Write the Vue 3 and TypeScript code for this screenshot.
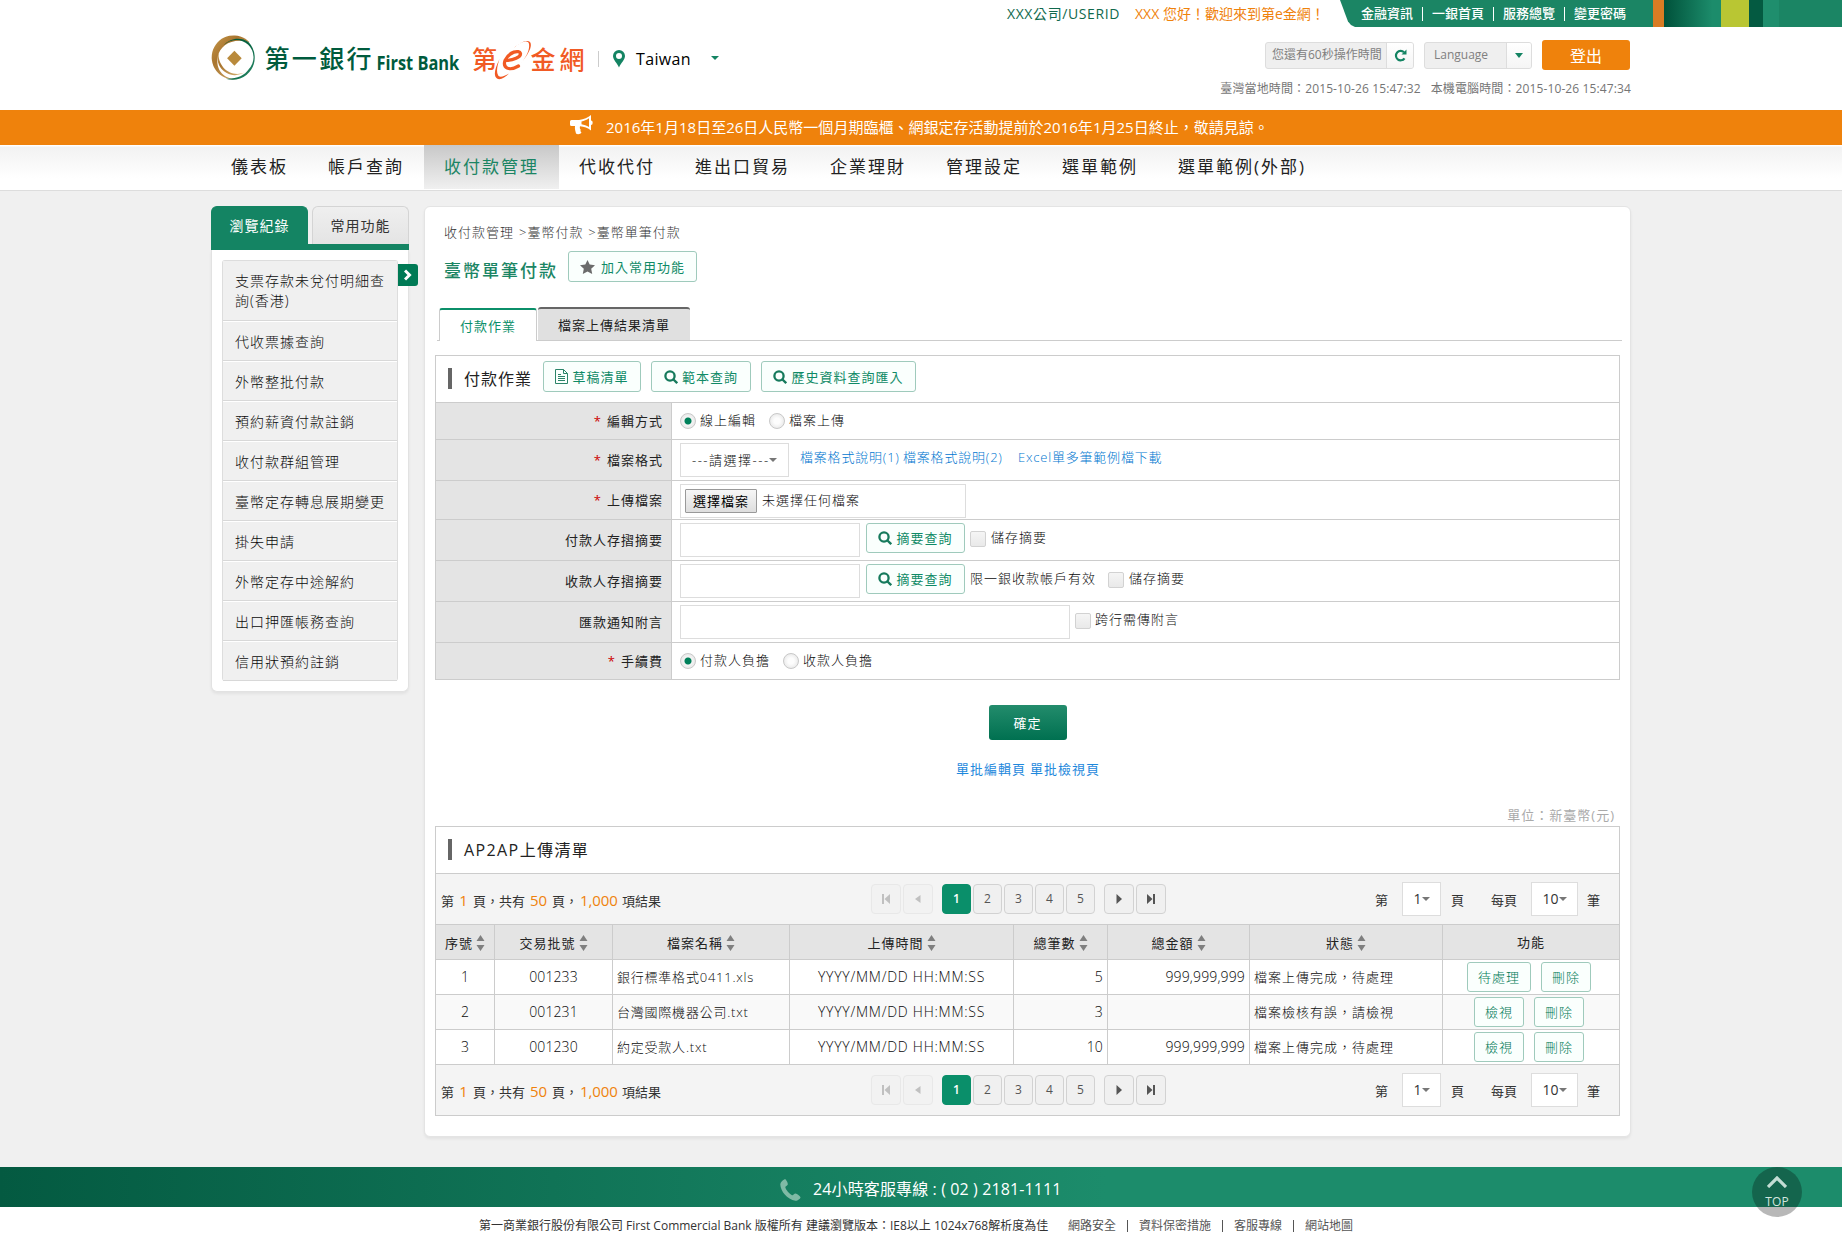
<script setup lang="ts">
interface Row {
  no: number
  batch: string
  file: string
  count: string
  amount: string
  status: string
  actions: string[]
}

const topLinks: string[] = ['金融資訊', '一銀首頁', '服務總覽', '變更密碼']
const navItems: string[] = ['儀表板', '帳戶查詢', '收付款管理', '代收代付', '進出口貿易', '企業理財', '管理設定', '選單範例', '選單範例(外部)']
const history: string[] = [
  '支票存款未兌付明細查詢(香港)',
  '代收票據查詢',
  '外幣整批付款',
  '預約薪資付款註銷',
  '收付款群組管理',
  '臺幣定存轉息展期變更',
  '掛失申請',
  '外幣定存中途解約',
  '出口押匯帳務查詢',
  '信用狀預約註銷',
]
const columns: string[] = ['序號', '交易批號', '檔案名稱', '上傳時間', '總筆數', '總金額', '狀態']
const rows: Row[] = [
  { no: 1, batch: '001233', file: '銀行標準格式0411.xls', count: '5', amount: '999,999,999', status: '檔案上傳完成，待處理', actions: ['待處理', '刪除'] },
  { no: 2, batch: '001231', file: '台灣國際機器公司.txt', count: '3', amount: '', status: '檔案檢核有誤，請檢視', actions: ['檢視', '刪除'] },
  { no: 3, batch: '001230', file: '約定受款人.txt', count: '10', amount: '999,999,999', status: '檔案上傳完成，待處理', actions: ['檢視', '刪除'] },
]
const footLinks: string[] = ['網路安全', '資料保密措施', '客服專線', '網站地圖']
// The list carries the same pager above and below its rows.
const listParts: string[] = ['pager', 'table', 'pager']
</script>

<template>
  <div class="page">
    <header class="header">
      <div class="stripes">
        <i class="s-orange"></i><i class="s-grad"></i><i class="s-lime"></i><i class="s-dark"></i><i class="s-mid"></i><i class="s-rest"></i>
      </div>
      <div class="wrap">
        <div class="top">
          <span class="user">XXX公司/USERID</span>
          <span class="hello">XXX 您好！歡迎來到第e金網！</span>
          <div class="toplinks">
            <template v-for="(l, i) in topLinks" :key="l">
              <i v-if="i" class="bar"></i><a>{{ l }}</a>
            </template>
          </div>
        </div>
        <div class="brand">
          <svg class="logo" width="376" height="46" viewBox="0 0 376 46">
            <defs>
              <linearGradient id="gold" x1="0" y1="0" x2="1" y2="1">
                <stop offset="0" stop-color="#c79a4b" /><stop offset=".35" stop-color="#a9752f" /><stop offset="1" stop-color="#d9b878" />
              </linearGradient>
              <linearGradient id="green" x1="0" y1="0" x2="1" y2="1">
                <stop offset="0" stop-color="#00502f" /><stop offset=".6" stop-color="#0d6b49" /><stop offset="1" stop-color="#2f8f6d" />
              </linearGradient>
            </defs>
            <g transform="translate(.7 .3)">
              <path fill="url(#gold)" d="M38 7A22 22 0 1 0 24 44C10 43 4 33 6 22C8 9 22 2 38 7Z" />
              <path fill="url(#gold)" d="M33 37A17.500 17.500 0 0 1 7 16C5 32 20 43 33 37Z" />
              <path fill="url(#green)" d="M12 10A17 17 0 0 1 37 34C33 40 25 44 14 43.500A22.300 22.300 0 0 0 37 7C29 1 18 3 12 10Z" />
              <path fill="#b98a3c" d="M22.700 15.500L30 23L22.700 30.500L15.400 23Z" />
            </g>
            <text x="53.500" y="33" class="zh" fill="#005b3d" textLength="107">第一銀行</text>
            <text transform="translate(165.500 34.500) scale(.82 1)" class="fb" fill="#005b3d">First Bank</text>
            <text x="261" y="33.500" class="zh" fill="#f15a24">第</text>
            <text x="319.500" y="33.500" class="zh" fill="#f15a24" textLength="54">金網</text>
            <path fill="none" stroke="#f15a24" stroke-width="3.200" stroke-linecap="round" d="M295 25.500C302 25.500 310 22 309.500 18.500C308.500 14.500 298 16.500 294 25.500C291.500 33 298 36.500 307.500 31" />
            <path fill="#f15a24" d="M303 13C309 7.500 317 4 318 9C319 15 315 22 309.500 28.500C317 20 322 11 319 7C316 4 308 8 303 13ZM288.500 24C284 33 282 41 286 43.500C289 45.500 294 42.500 298 38.500C293 41.500 288 43 287 40C285 36 286.500 30 288.500 24Z" />
          </svg>
          <i class="vline"></i>
          <svg class="pin" width="12" height="18" viewBox="0 0 12 18"><path fill="#148463" fill-rule="evenodd" d="M6 0A6 6 0 0 0 0 6C0 9.500 4 13 6 17.500C8 13 12 9.500 12 6A6 6 0 0 0 6 0ZM6 3A3 3 0 1 1 6 9A3 3 0 0 1 6 3Z" /></svg>
          <span class="country">Taiwan</span>
          <i class="tri green-tri"></i>
        </div>
        <div class="tools">
          <div class="toolrow">
            <div class="combo timer">
              <span>您還有60秒操作時間</span>
              <b><svg width="13" height="13" viewBox="0 0 13 13"><path fill="none" stroke="#148463" stroke-width="2.200" d="M10.500 9.300A4.700 4.700 0 1 1 10 3.300" /><path fill="#148463" d="M12.500 .5V5.500H7.500Z" /></svg></b>
            </div>
            <div class="combo lang"><span>Language</span><b><i class="tri big-tri"></i></b></div>
            <button class="logout">登出</button>
          </div>
          <div class="clock"><span>臺灣當地時間：2015-10-26 15:47:32</span><span>本機電腦時間：2015-10-26 15:47:34</span></div>
        </div>
      </div>
    </header>

    <div class="notice">
      <svg width="24" height="20" viewBox="0 0 24 20"><path fill="#fff" fill-rule="evenodd" d="M1.500 5H9C14 4.500 18 2.500 21 0V5.500A1.500 2 0 0 1 21 10V15.500C18 13 14 11.500 10 11.200C9.500 13 10 14 10.800 14.700C9.800 16 11 16.800 11.500 17.500C10.500 19.500 7 19.500 6 18.500C5.500 16 4.500 14 5 11H1.500A1.500 1.500 0 0 1 0 9.500V6.500A1.500 1.500 0 0 1 1.500 5ZM11.500 6.500V9.300C14 9.700 16.500 10.500 19 12V3.300C16.500 5 14 6 11.500 6.500Z" /></svg>
      <span>2016年1月18日至26日人民幣一個月期臨櫃、網銀定存活動提前於2016年1月25日終止，敬請見諒。</span>
    </div>

    <nav class="nav">
      <div class="navwrap"><a v-for="(n, i) in navItems" :key="n" :class="{ on: i === 2 }">{{ n }}</a></div>
    </nav>

    <main class="main">
      <aside class="side">
        <div class="sidetabs"><a class="on">瀏覽紀錄</a><a>常用功能</a></div>
        <div class="sidebody">
          <ul><li v-for="h in history" :key="h"><span>{{ h }}</span></li></ul>
          <div class="expander"><svg width="8" height="12" viewBox="0 0 8 12"><path fill="none" stroke="#fff" stroke-width="3" d="M1 1.500L5.500 6L1 10.500" /></svg></div>
        </div>
      </aside>

      <section class="card">
        <div class="crumb">收付款管理 &gt;臺幣付款 &gt;臺幣單筆付款</div>
        <div class="titlerow">
          <h1>臺幣單筆付款</h1>
          <button class="btn fav"><svg width="15" height="14" viewBox="0 0 15 14"><path fill="#6b6b6b" d="M7.500 0L9.700 4.600L15 5.200L11.200 8.700L12.200 14L7.500 11.400L2.800 14L3.800 8.700L0 5.200L5.300 4.600Z" /></svg>加入常用功能</button>
        </div>
        <div class="tabs"><a class="on">付款作業</a><a>檔案上傳結果清單</a></div>

        <div class="panel form">
          <div class="phead">
            <i class="mark"></i><h2>付款作業</h2>
            <button class="btn b1"><svg width="13" height="15" viewBox="0 0 13 15"><path fill="none" stroke="#2b8468" d="M.5 .5H8.500L12.500 4.500V14.500H.5ZM8.500 .5V4.500H12.500M3 5.500H6M3 7.500H10M3 9.500H10M3 11.500H10" /></svg>草稿清單</button>
            <button class="btn b2"><svg width="14" height="14" viewBox="0 0 14 14"><g fill="none" stroke="#167a5c" stroke-width="2.300"><circle cx="6" cy="6" r="4.600" /><path d="M9.200 9.200L13.200 13.200" /></g></svg>範本查詢</button>
            <button class="btn b3"><svg width="14" height="14" viewBox="0 0 14 14"><g fill="none" stroke="#167a5c" stroke-width="2.300"><circle cx="6" cy="6" r="4.600" /><path d="M9.200 9.200L13.200 13.200" /></g></svg>歷史資料查詢匯入</button>
          </div>
          <div class="fr r37">
            <label><em>*</em>編輯方式</label>
            <div class="cell"><i class="radio on"></i><span class="t o1">線上編輯</span><i class="radio"></i><span class="t">檔案上傳</span></div>
          </div>
          <div class="fr r41">
            <label><em>*</em>檔案格式</label>
            <div class="cell"><div class="box sel"><span>---請選擇---</span><i class="tri grey-tri"></i></div><a class="t l1">檔案格式說明(1)</a><a class="t l2">檔案格式說明(2)</a><a class="t l3">Excel單多筆範例檔下載</a></div>
          </div>
          <div class="fr r39">
            <label><em>*</em>上傳檔案</label>
            <div class="cell"><div class="box file"><button>選擇檔案</button><span>未選擇任何檔案</span></div></div>
          </div>
          <div class="fr r41">
            <label>付款人存摺摘要</label>
            <div class="cell"><div class="box txt"></div><button class="btn look"><svg width="14" height="14" viewBox="0 0 14 14"><g fill="none" stroke="#167a5c" stroke-width="2.300"><circle cx="6" cy="6" r="4.600" /><path d="M9.200 9.200L13.200 13.200" /></g></svg>摘要查詢</button><i class="check"></i><span class="t c1">儲存摘要</span></div>
          </div>
          <div class="fr r41">
            <label>收款人存摺摘要</label>
            <div class="cell"><div class="box txt"></div><button class="btn look"><svg width="14" height="14" viewBox="0 0 14 14"><g fill="none" stroke="#167a5c" stroke-width="2.300"><circle cx="6" cy="6" r="4.600" /><path d="M9.200 9.200L13.200 13.200" /></g></svg>摘要查詢</button><span class="t note">限一銀收款帳戶有效</span><i class="check"></i><span class="t c1">儲存摘要</span></div>
          </div>
          <div class="fr r41">
            <label>匯款通知附言</label>
            <div class="cell"><div class="box wide"></div><i class="check"></i><span class="t c2">跨行需傳附言</span></div>
          </div>
          <div class="fr r37">
            <label><em>*</em>手續費</label>
            <div class="cell"><i class="radio on"></i><span class="t o2">付款人負擔</span><i class="radio"></i><span class="t">收款人負擔</span></div>
          </div>
        </div>

        <div class="submit"><button>確定</button></div>
        <div class="links"><a>單批編輯頁</a><a>單批檢視頁</a></div>
        <div class="unit">單位：新臺幣(元)</div>

        <div class="panel list">
          <div class="phead"><i class="mark"></i><h2>AP2AP上傳清單</h2></div>
          <template v-for="(part, pi) in listParts" :key="pi">
            <div v-if="part === 'pager'" class="pager">
              <div class="sum">第<b class="n1">1</b>頁，共有<b class="n2">50</b>頁，<b class="n3">1,000</b>項結果</div>
              <div class="pages">
                <a class="off"><svg width="8" height="10" viewBox="0 0 8 10"><path fill="currentColor" d="M0 0H2V10H0ZM8 0V10L2.500 5Z" /></svg></a>
                <a class="off gap1"><svg width="6" height="8" viewBox="0 0 6 8"><path fill="currentColor" d="M5.500 0V8L0 4Z" /></svg></a>
                <a class="num cur">1</a><a v-for="n in 4" :key="n" class="num">{{ n + 1 }}</a>
                <a class="gap2"><svg width="6" height="10" viewBox="0 0 6 10"><path fill="currentColor" d="M.5 0V10L6 5Z" /></svg></a>
                <a><svg width="8" height="10" viewBox="0 0 8 10"><path fill="currentColor" d="M6 0H8V10H6ZM0 0V10L5.500 5Z" /></svg></a>
              </div>
              <div class="jump">
                <span>第</span><div class="box s1">1<i class="tri grey-tri"></i></div><span class="pg">頁</span><span class="per">每頁</span><div class="box s2">10<i class="tri grey-tri"></i></div><span>筆</span>
              </div>
            </div>
            <table v-else>
              <colgroup><col style="width: 59px" /><col style="width: 118px" /><col style="width: 177px" /><col style="width: 224px" /><col style="width: 94px" /><col style="width: 142px" /><col style="width: 193px" /><col style="width: 176px" /></colgroup>
              <thead>
                <tr>
                  <th v-for="c in columns" :key="c"><span>{{ c }}</span><svg width="9" height="16" viewBox="0 0 9 16"><path fill="#7f7f7f" d="M4.500 0L8.500 6H.5ZM.5 10H8.500L4.500 16Z" /></svg></th>
                  <th>功能</th>
                </tr>
              </thead>
              <tbody>
                <tr v-for="r in rows" :key="r.no">
                  <td class="c">{{ r.no }}</td>
                  <td class="c">{{ r.batch }}</td>
                  <td class="fn">{{ r.file }}</td>
                  <td class="c dt">YYYY/MM/DD HH:MM:SS</td>
                  <td class="r">{{ r.count }}</td>
                  <td class="r">{{ r.amount }}</td>
                  <td>{{ r.status }}</td>
                  <td class="act"><div><button v-for="a in r.actions" :key="a" class="btn">{{ a }}</button></div></td>
                </tr>
              </tbody>
            </table>
          </template>
        </div>
      </section>
    </main>

    <footer>
      <div class="hotline">
        <svg width="21" height="22" viewBox="0 0 21 22"><path fill="#7fbaa5" d="M5.500 .3C7 2 8 4.500 7.800 5.500C7.500 6.800 5.300 7.200 5.300 8.300C5.800 11 9.500 15 12 16.200C13.300 16.500 14.300 14.500 15.500 14.600C17.500 15.200 19.500 16.800 20.500 18.200C20.500 19.800 17.500 21.800 15.500 21.700C7 20.500 .5 12 .3 5.500C.5 3 3.500 .2 5.500 .3Z" /></svg>
        <span>24小時客服專線 : ( 02 ) 2181-1111</span>
        <div class="totop"><svg width="20" height="12" viewBox="0 0 20 12"><path fill="none" stroke="#c3ddd4" stroke-width="3.200" d="M1 11L10 2L19 11" /></svg><span>TOP</span></div>
      </div>
      <div class="copy">
        <span class="ct">第一商業銀行股份有限公司 First Commercial Bank 版權所有 建議瀏覽版本：IE8以上 1024x768解析度為佳</span>
        <template v-for="(l, i) in footLinks" :key="l"><i v-if="i"></i><a>{{ l }}</a></template>
      </div>
    </footer>
  </div>
</template>

<style>
body { background: #f0f0f0; }
</style>

<style scoped>
* { box-sizing: border-box; }
.page { height: 1247px; overflow: hidden; display: flex; flex-direction: column; font: 13px/20px "Open Sans", "Noto Sans CJK TC", sans-serif; color: #333; white-space: nowrap; }
button { font-family: inherit; font-weight: inherit; margin: 0; padding: 0; display: flex; align-items: center; justify-content: center; }
i, em, b { font-style: normal; font-weight: normal; }
svg { display: block; flex: none; }
.tri { width: 0; height: 0; border: 4px solid transparent; border-bottom: 0; border-top-color: #777; flex: none; }

.header { position: relative; height: 110px; background: #fff; display: flex; justify-content: center; }
.stripes { position: absolute; left: 1640px; right: 0; top: 0; height: 27px; display: flex; }
.stripes::before { content: ""; width: 13px; background: #1b8564; }
.stripes i { height: 27px; }
.s-orange { width: 11px; background: #d97c24; }
.s-grad { width: 57px; background: linear-gradient(90deg, #00513a, #1c8c6b 85%); }
.s-lime { width: 28px; background: #b9c633; }
.s-dark { width: 14px; background: #045a41; }
.s-mid { width: 16px; background: #1f8e6d; }
.s-rest { flex: 1; background: #1b8564; }
.wrap { width: 1420px; display: grid; grid-template-columns: 1fr auto; grid-template-rows: 27px 83px; }
.top { grid-column: 1 / 3; display: flex; justify-content: flex-end; line-height: 27px; font-size: 13px; position: relative; left: 10px; }
.user { width: 128px; color: #10694d; font-size: 14px; letter-spacing: .6px; }
.hello { width: 205px; color: #ef820c; font-size: 14px; letter-spacing: 0; }
.toplinks { width: 301px; background: #1b8564; color: #fff; display: flex; align-items: center; padding-left: 21px; font-weight: 500; clip-path: polygon(0 0, 100% 0, 100% 100%, 15px 100%, 11px 93%, 8px 80%); }
.bar { width: 1px; height: 14px; background: #fff; margin: 0 9px 0 9px; }
.brand { display: flex; align-items: flex-start; }
.logo { margin: 8px 0 0 0; overflow: visible; }
.zh { font: 500 25px "Noto Sans CJK TC", sans-serif; }
.fb { font: 700 20px "Open Sans", sans-serif; }
.vline { width: 1px; height: 16px; background: #ccc; margin: 24px 0 0 11px; }
.pin { margin: 23px 0 0 14px; }
.country { font-size: 16px; line-height: 24px; margin: 20px 0 0 11px; width: 75px; color: #000; letter-spacing: .35px; }
.green-tri { border-top-color: #148463; margin-top: 29px; }
.tools { display: flex; flex-direction: column; align-items: flex-end; padding-top: 13px; }
.toolrow { display: flex; align-items: center; height: 30px; }
.combo { height: 27px; display: flex; border: 1px solid #ddd; border-radius: 3px; background: #efefef; color: #808080; font-size: 12px; line-height: 24px; overflow: hidden; }
.combo span { flex: 1; }
.combo b { border-left: 1px solid #ddd; background: linear-gradient(#fff, #f5f5f5); display: flex; align-items: center; justify-content: center; }
.timer { width: 149px; margin-right: 10px; padding-left: 6px; }
.timer b { width: 27px; }
.lang { width: 108px; margin-right: 10px; padding-left: 9px; }
.lang b { width: 25px; }
.big-tri { border-width: 5px 4.500px 0; border-top-color: #148463; }
.logout { width: 88px; height: 30px; border: 0; border-radius: 3px; background: #ef820c; color: #fff; font-size: 16px; margin-right: 1px; }
.clock { margin-top: 9px; font-size: 12px; color: #757575; line-height: 20px; display: flex; gap: 10px; letter-spacing: .12px; }

.notice { height: 35px; background: #ef820c; color: #fff; display: flex; padding-left: 570px; font-size: 15px; line-height: 35px; }
.notice svg { margin: 5px 12px 0 0; }
.notice span { letter-spacing: .01px; }

.nav { height: 46px; background: linear-gradient(#fff 0, #fff 1px, #f2f2f2 2px, #fff 75%); border-bottom: 1px solid #ddd; display: flex; justify-content: center; }
.navwrap { width: 1420px; display: flex; height: 44px; }
.navwrap a { padding: 0 20px; font-size: 17px; line-height: 44px; letter-spacing: 2px; color: #222; }
.navwrap a.on { background: linear-gradient(#c8c8c8, #f0f0f0); color: #1b8564; }

.main { width: 1420px; margin: 0 auto; height: 976px; display: flex; align-items: flex-start; gap: 15px; padding-top: 15px; }
.side { width: 198px; font-weight: 300; }
.sidetabs { display: flex; justify-content: space-between; height: 44px; border-bottom: 6px solid #148463; font-weight: 400; }
.sidetabs a { width: 97px; height: 38px; border-radius: 6px 6px 0 0; text-align: center; line-height: 37px; font-size: 14px; letter-spacing: 1px; border: 1px solid #d4d4d4; border-bottom: 0; background: linear-gradient(#efefef, #e4e4e4); }
.sidetabs a.on { background: #148463; border-color: #148463; color: #fff; }
.sidebody { height: 442px; background: #fff; border: 1px solid #e2e2e2; border-top: 0; border-radius: 0 0 6px 6px; box-shadow: 0 2px 3px rgba(0, 0, 0, .06); padding: 10px; position: relative; }
ul { list-style: none; margin: 0; padding: 0; border: 1px solid #ddd; border-bottom: 0; border-radius: 3px; }
li { height: 40px; background: #f0f0f0; border-bottom: 1px solid #d8d8d8; border-top: 1px solid #fff; display: flex; align-items: center; padding: 1px 12px 0; font-size: 14px; letter-spacing: 1px; white-space: normal; color: #0a0a0a; }
li:first-child { height: 60px; border-top: 0; }
li span { width: 151px; }
.expander { position: absolute; left: 186px; top: 14px; width: 20px; height: 22px; background: #007a55; border-radius: 0 3px 3px 0; display: flex; align-items: center; justify-content: center; }

.card { width: 1207px; height: 931px; background: #fff; border: 1px solid #e4e4e4; border-radius: 6px; box-shadow: 0 2px 3px rgba(0, 0, 0, .06); padding: 0 8px 0 10px; margin-right: -1px; }
.crumb { margin: 15px 0 0 9px; letter-spacing: 1px; color: #333; word-spacing: .6px; font-weight: 300; }
.titlerow { display: flex; margin: 9px 0 0 9px; height: 31px; }
h1 { margin: 5px 11px 0 0; font-size: 17px; line-height: 30px; letter-spacing: 2px; font-weight: 500; color: #1b8564; width: 113px; }
.btn { height: 31px; border: 1px solid #9fcabc; border-radius: 3px; background: #fafffd; color: #0f8a66; font-size: 13px; line-height: 20px; letter-spacing: 1px; }
.fav { width: 129px; gap: 6px; }
.tabs { display: flex; align-items: flex-end; margin: 25px 0 0 2px; height: 34px; border-bottom: 1px solid #ccc; padding-left: 2px; width: 1185px; }
.tabs a { height: 33px; width: 152px; background: #e0e0e0; border-top: 2px solid #666; border-radius: 3px 3px 0 0; text-align: center; line-height: 32px; letter-spacing: 1px; color: #222; margin-left: 1px; }
.tabs a.on { width: 98px; background: #fff; border: 1px solid #ccc; border-top: 2px solid #0b8f69; border-bottom: 0; color: #0b8f69; margin: 0 0 -1px; line-height: 32px; }

.panel { border: 1px solid #ccc; width: 1185px; }
.form { margin-top: 14px; }
.phead { height: 46px; display: flex; padding-left: 12px; }
.mark { width: 4px; height: 21px; background: #666; margin: 12px 12px 0 0; }
h2 { margin: 12px 0 0; font-size: 16px; line-height: 22px; font-weight: 400; letter-spacing: 1px; width: 79px; color: #222; }
.list h2 { letter-spacing: 1.400px; }
.phead .btn { margin-top: 5px; margin-right: 10px; gap: 4px; }
.b1 { width: 98px; } .b2 { width: 100px; } .b3 { width: 155px; }
.fr { display: flex; border-top: 1px solid #ccc; }
.r37 { height: 37px; } .r41 { height: 41px; } .r39 { height: 39px; }
.fr label { width: 236px; background: #e4e4e4; border-right: 1px solid #ccc; text-align: right; padding-right: 8px; display: flex; justify-content: flex-end; align-items: center; letter-spacing: 1px; color: #222; }
.fr em { color: #c00; margin-right: 5px; }
.cell { display: flex; align-items: flex-start; padding: 3px 0 0 8px; letter-spacing: 1px; font-weight: 300; color: #0a0a0a; }
.radio { width: 16px; height: 16px; border-radius: 8px; border: 1px solid #c8c8c8; background: radial-gradient(#fdfdfd 30%, #e0e0e0); margin: 7px 4px 0 0; }
.radio.on { background: radial-gradient(circle, #00805a 3px, #f4f4f4 4px, #e0e0e0); }
.t { margin-top: 4px; }
.o1, .o2 { width: 69px; } .o2 { width: 83px; }
.box { border: 1px solid #ddd; background: #fff; height: 34px; display: flex; align-items: center; }
.sel { width: 109px; padding-left: 11px; }
.sel span { width: 77px; letter-spacing: 1.500px; }
a.t { color: #0077d0; margin-top: 4px; letter-spacing: .8px; }
.l1 { margin-left: 11px; width: 103px; } .l2 { width: 115px; }
.file { width: 286px; padding: 0 0 1px 4px; }
.file button { width: 72px; height: 24px; border: 1px solid #999; border-radius: 1px; background: linear-gradient(#f6f6f6, #dedede); color: #000; font-size: 13px; font-weight: 400; letter-spacing: 1px; margin-right: 5px; padding-bottom: 1px; }
.file span { padding-bottom: 1px; }
.txt { width: 180px; } .wide { width: 390px; margin-right: 5px; }
.look { width: 99px; height: 30px; gap: 4px; margin: 0 5px 0 6px; font-weight: 400; }
.check { width: 16px; height: 16px; border: 1px solid #d2d2d2; border-radius: 2px; background: linear-gradient(#f5f5f5, #e9e9e9); margin-top: 8px; }
.c1 { margin-left: 5px; } .c2 { margin-left: 4px; }
.note { width: 138px; }

.submit { display: flex; justify-content: center; margin: 25px 2px 0 0; }
.submit button { width: 78px; height: 35px; border: 0; border-radius: 3px; background: linear-gradient(#238c6c, #007050); color: #fff; font-size: 13px; letter-spacing: 1px; }
.links { display: flex; justify-content: center; gap: 4px; margin: 19px 1px 0 0; color: #1e88dc; letter-spacing: 1px; }
.unit { text-align: right; color: #aaa; letter-spacing: 1px; margin: 26px 7px 0 0; }
.list { margin-top: 1px; }

.pager { height: 51px; border-top: 1px solid #ccc; background: #f4f4f4; display: flex; }
.sum { width: 435px; padding: 16px 0 0 5px; }
.sum b { color: #ef820c; font-size: 15px; display: inline-block; text-align: center; letter-spacing: -.1px; }
.n1 { width: 19px; } .n2 { width: 27px; } .sum .n3 { width: 44px; padding-left: 2px; text-align: left; }
.pages { display: flex; gap: 2px; padding-top: 10px; width: 504px; }
.pages a { width: 30px; height: 30px; border: 1px solid #d2d2d2; border-radius: 4px; background: #f0f0f0; display: flex; align-items: center; justify-content: center; color: #555; }
.pages .num { width: 29px; font-size: 12px; }
.pages .off { border-color: #e8e8e8; background: #f2f2f2; color: #c0c0c0; }
.pages .cur { background: #0a8f6a; border-color: #0a8f6a; color: #fff; font-weight: 600; }
.pages .gap1 { margin-right: 7px; } .pages .gap2 { margin-left: 7px; }
.jump { display: flex; line-height: 53px; }
.jump > .box { margin: 8px 10px 0 14px; font-size: 14px; line-height: 32px; justify-content: center; }
.s1 { width: 39px; } .s2 { width: 47px; }
.jump .pg { margin-right: 27px; }
.jump > .s2 { margin-right: 9px; }

table { width: 1183px; table-layout: fixed; border-collapse: separate; border-spacing: 0; letter-spacing: 1px; }
th, td { border-top: 1px solid #ccc; border-right: 1px solid #ccc; padding: 0 4px; height: 35px; line-height: 20px; }
th:last-child, td:last-child { border-right: 0; }
th { background: #e4e4e4; font-weight: 400; color: #222; }
th span { display: inline-block; vertical-align: middle; margin-right: 3px; }
th svg { display: inline-block; vertical-align: middle; }
td { background: #fff; font-weight: 300; color: #0a0a0a; }
tbody tr:nth-child(2) td { background: #f9f9f9; }
.c { text-align: center; font-size: 14px; letter-spacing: .1px; }
.dt { letter-spacing: .75px; }
.r { text-align: right; padding-right: 4px; font-size: 14px; letter-spacing: .15px; }
.fn { letter-spacing: .78px; }
.act div { display: flex; justify-content: center; gap: 10px; padding-right: 4px; }
.act .btn { height: 30px; width: 50px; color: #007a56; }
.act .btn:first-child:nth-last-child(2) { width: auto; padding: 0 10px; }

.hotline { height: 40px; background: linear-gradient(90deg, #045a41, #1c8c6b 60%); color: #fff; font-size: 16px; line-height: 44px; display: flex; padding-left: 780px; position: relative; letter-spacing: .12px; }
.hotline > svg { margin: 12px 12px 0 0; }
.totop { position: absolute; left: 1752px; top: 0; width: 50px; height: 50px; border-radius: 25px; background: rgba(0, 0, 0, .28); display: flex; flex-direction: column; align-items: center; z-index: 1; }
.totop svg { margin: 9px 0 0 0; }
.totop span { font-size: 12px; line-height: 18px; margin-top: 5px; color: #d2e6df; }
footer { background: #fff; height: 80px; }
.copy { display: flex; align-items: center; padding-left: 479px; height: 38px; font-size: 12px; color: #333; }
.ct { width: 589px; letter-spacing: 0; }
.copy a { color: #555; }
.copy i { width: 1px; height: 12px; background: #555; margin: 0 11px; }
</style>
